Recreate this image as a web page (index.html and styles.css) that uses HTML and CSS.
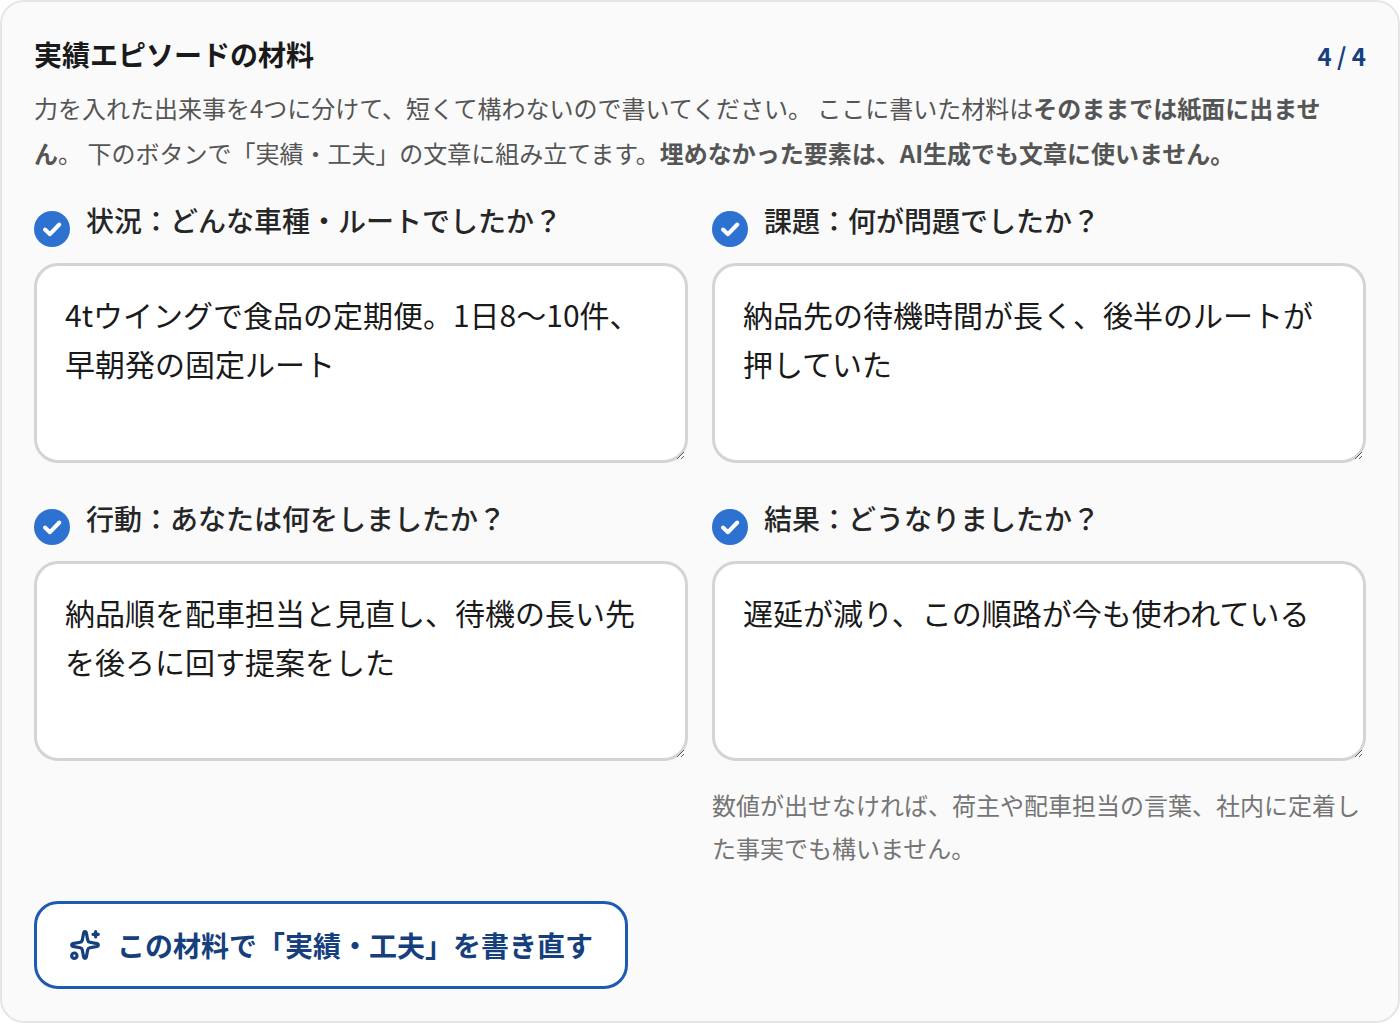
FILE: index.html
```html
<!DOCTYPE html>
<html lang="ja">
  <head>
    <meta charset="UTF-8" />
    <meta name="viewport" content="width=device-width, initial-scale=1" />
    <title>実績エピソードの材料</title>
    <link rel="stylesheet" href="styles.css">
  </head>
  <body>
    <section class="card">
      <div class="card-head">
        <h3>実績エピソードの材料</h3>
        <span class="count">4 / 4</span>
      </div>
      <p class="lead">
        力を入れた出来事を4つに分けて、短くて構わないので書いてください。
        ここに書いた材料は<strong>そのままでは紙面に出ません</strong>。
        下のボタンで「実績・工夫」の文章に組み立てます。<strong>埋めなかった要素は、AI生成でも文章に使いません。</strong>
      </p>

      <div class="fields">
        <div class="field">
          <label for="situation">
            <svg class="mark" viewBox="0 0 36 36" aria-hidden="true"><circle cx="18" cy="18" r="18" /><path d="M11 18.5l5 4.7 9.3-9.7" /></svg>
            状況：どんな車種・ルートでしたか？
          </label>
          <textarea id="situation" rows="3">4tウイングで食品の定期便。1日8〜10件、早朝発の固定ルート</textarea>
        </div>

        <div class="field">
          <label for="task">
            <svg class="mark" viewBox="0 0 36 36" aria-hidden="true"><circle cx="18" cy="18" r="18" /><path d="M11 18.5l5 4.7 9.3-9.7" /></svg>
            課題：何が問題でしたか？
          </label>
          <textarea id="task" rows="3">納品先の待機時間が長く、後半のルートが押していた</textarea>
        </div>

        <div class="field">
          <label for="action">
            <svg class="mark" viewBox="0 0 36 36" aria-hidden="true"><circle cx="18" cy="18" r="18" /><path d="M11 18.5l5 4.7 9.3-9.7" /></svg>
            行動：あなたは何をしましたか？
          </label>
          <textarea id="action" rows="3">納品順を配車担当と見直し、待機の長い先を後ろに回す提案をした</textarea>
        </div>

        <div class="field">
          <label for="result">
            <svg class="mark" viewBox="0 0 36 36" aria-hidden="true"><circle cx="18" cy="18" r="18" /><path d="M11 18.5l5 4.7 9.3-9.7" /></svg>
            結果：どうなりましたか？
          </label>
          <textarea id="result" rows="3" aria-describedby="resultHint">遅延が減り、この順路が今も使われている</textarea>
          <p class="hint" id="resultHint">数値が出せなければ、荷主や配車担当の言葉、社内に定着した事実でも構いません。</p>
        </div>
      </div>

      <button type="button" class="rewrite-btn">
        <svg class="sparkles" viewBox="0 0 24 24" aria-hidden="true">
          <path d="M11.017 2.814a1 1 0 0 1 1.966 0l1.051 5.558a2 2 0 0 0 1.594 1.594l5.558 1.051a1 1 0 0 1 0 1.966l-5.558 1.051a2 2 0 0 0-1.594 1.594l-1.051 5.558a1 1 0 0 1-1.966 0l-1.051-5.558a2 2 0 0 0-1.594-1.594l-5.558-1.051a1 1 0 0 1 0-1.966l5.558-1.051a2 2 0 0 0 1.594-1.594z" />
          <path d="M20 2v4M22 4h-4" />
          <circle cx="4" cy="20" r="2" />
        </svg>
        この材料で「実績・工夫」を書き直す
      </button>
    </section>
  </body>
</html>
```

FILE: styles.css
```css
* {
  box-sizing: border-box;
}

body {
  margin: 0;
  background: #fff;
  color: #1a1a1a;
  font-family: "Noto Sans CJK JP", sans-serif;
}

h3,
p {
  margin: 0;
}

.card {
  padding: 32px;
  background: #fafafa;
  border: 2px solid #e5e5e5;
  border-radius: 24px;
}

.card-head {
  display: flex;
  justify-content: space-between;
  align-items: baseline;
  margin-bottom: 9px;
}

h3 {
  font-size: 28px;
  line-height: 40px;
  font-weight: 700;
}

.count {
  color: #163f7e;
  font-size: 24px;
  line-height: 40px;
  font-weight: 700;
}

.lead {
  color: #555;
  font-size: 24px;
  line-height: 45px;
}

.fields {
  display: grid;
  grid-template-columns: 1fr 1fr;
  gap: 28px 24px;
  margin-top: 18px;
}

.field label {
  display: flex;
  align-items: flex-end;
  gap: 16px;
  margin-bottom: 16px;
  color: #262626;
  font-size: 28px;
  line-height: 54px;
  font-weight: 500;
}

.mark {
  width: 36px;
  height: 36px;
  flex: none;
}

.mark circle {
  fill: #2d72d0;
}

.mark path {
  fill: none;
  stroke: #fff;
  stroke-width: 4;
  stroke-linecap: round;
  stroke-linejoin: round;
}

textarea {
  display: block;
  width: 100%;
  padding: 24px 28px 23px;
  background: #fff;
  color: #1a1a1a;
  border: 3px solid #d4d4d4;
  border-radius: 24px;
  font-family: inherit;
  font-size: 30px;
  line-height: 49px;
  resize: vertical;
}

.hint {
  margin-top: 22px;
  color: #757575;
  font-size: 24px;
  line-height: 43px;
}

.rewrite-btn {
  display: inline-flex;
  align-items: center;
  gap: 16px;
  margin-top: 32px;
  padding: 20px 32px;
  background: #fff;
  color: #163f7e;
  border: 3px solid #1d5bb0;
  border-radius: 24px;
  font-family: inherit;
  font-size: 28px;
  line-height: 42px;
  font-weight: 700;
  cursor: pointer;
}

.sparkles {
  width: 32px;
  height: 32px;
  fill: none;
  stroke: currentColor;
  stroke-width: 2.4;
  stroke-linecap: round;
  stroke-linejoin: round;
}
```
